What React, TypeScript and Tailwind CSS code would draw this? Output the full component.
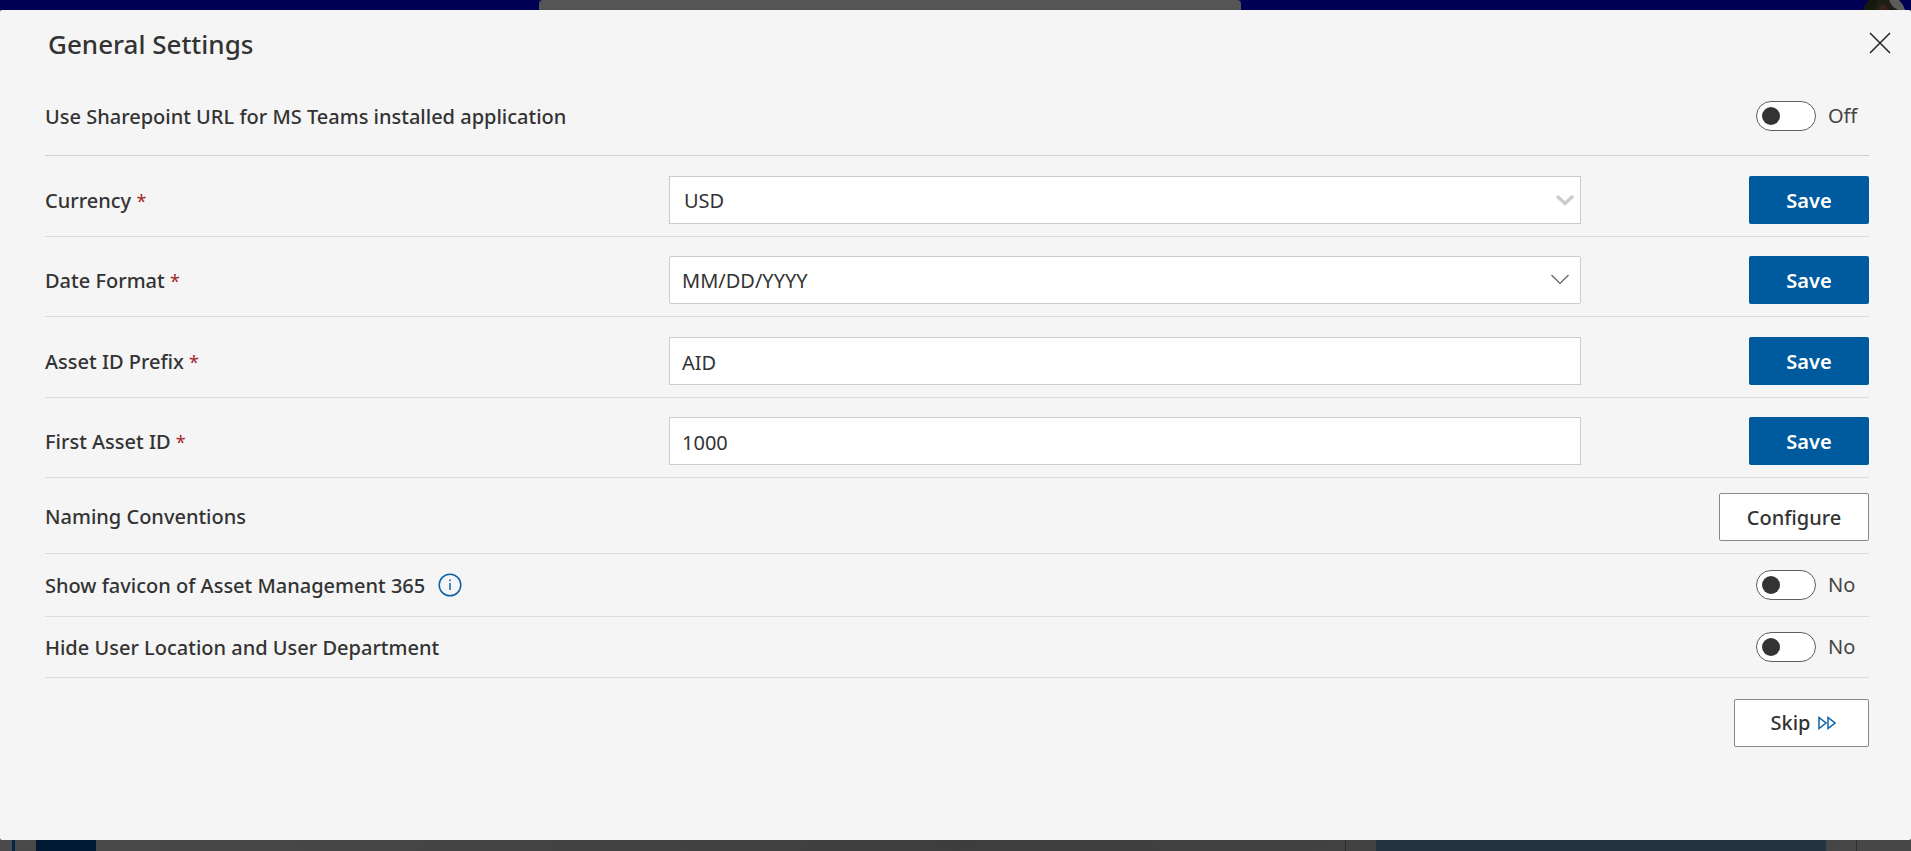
import { useState, type ReactNode } from "react";

function Toggle({ id, label, off, on }: { id: string; label: string; off: string; on: string }) {
  const [checked, setChecked] = useState(false);
  return (
    <div className="flex items-center justify-end">
      <label className="relative flex h-[30px] w-[113px] cursor-pointer items-center gap-3 text-[20px] leading-7 text-[#444444]">
        <input
          id={id}
          type="checkbox"
          role="switch"
          aria-label={label}
          checked={checked}
          onChange={(e) => setChecked(e.target.checked)}
          className="peer sr-only"
        />
        <span className="flex h-[30px] w-[60px] shrink-0 items-center rounded-full border border-[#605e5c] bg-white px-[5px] peer-checked:justify-end">
          <span className="size-[18px] rounded-full bg-[#333333]" />
        </span>
        <span>{checked ? on : off}</span>
      </label>
    </div>
  );
}

function FieldRow({ id, label, children }: { id: string; label: string; children: ReactNode }) {
  return (
    <div className="grid grid-cols-[13fr_19fr_6fr] items-center border-b border-[#dcdcdc] pt-5 pb-3 even:pt-[19px]">
      <label htmlFor={id} className="pt-0.5 font-medium">
        {label} <span className="text-[18px] leading-5 font-normal text-[#a4262c]">*</span>
      </label>
      {children}
      <button
        type="button"
        className="h-12 w-[120px] justify-self-end rounded-[2px] bg-[#005a9e] pt-0.5 font-semibold text-white"
      >
        Save
      </button>
    </div>
  );
}

const fieldClass = "block h-12 w-full border border-[#cccccc] bg-white pt-0.5 text-[#333333]";

export default function App() {
  return (
    <div className="flex min-h-screen flex-col bg-[#434343] font-['Noto_Sans',sans-serif] text-[20px] leading-7 text-[#333333]">
      <div className="flex h-[10px] shrink-0 overflow-hidden bg-[#000055]">
        <div className="ml-[539px] w-[702px] rounded-t-[4px] bg-[#555555]" />
        <svg className="mr-1 ml-auto" width="46" height="10" viewBox="0 0 46 10" aria-hidden="true">
          <circle cx="23" cy="16" r="22" fill="#17190f" />
          <path d="M18 0h20a22 22 0 0 1 6 10H37q-7-3-9-10z" fill="#5c5c5c" />
          <path d="M17 0h11q2 7 8 10H14z" fill="#1e2014" />
          <path d="M18 10q0-5 4-5t4 5z" fill="#3a231d" />
        </svg>
      </div>

      <main className="flex-1 rounded-[2px] bg-[#f5f5f5] pr-[42px] pl-[45px]">
        <header className="flex h-[71px] items-start justify-between pt-[18px]">
          <h1 className="pl-[3px] text-[26px] leading-8 font-medium">General Settings</h1>
          <button type="button" aria-label="Close" className="-mr-[26px] p-1">
            <svg width="22" height="22" viewBox="0 0 22 22" fill="none" stroke="#222" strokeWidth="1.5">
              <path d="M1 1l20 20M21 1L1 21" />
            </svg>
          </button>
        </header>

        <div className="flex items-start justify-between border-b border-[#d0d0d0] pt-5 pb-6">
          <label htmlFor="sharepoint" className="pt-0.5 font-medium">
            Use Sharepoint URL for MS Teams installed application
          </label>
          <Toggle id="sharepoint" label="Use Sharepoint URL for MS Teams installed application" off="Off" on="On" />
        </div>

        <div>
          <FieldRow id="currency" label="Currency">
            <div className="relative">
              <select id="currency" defaultValue="USD" className={`${fieldClass} appearance-none pl-[14px]`}>
                <option>USD</option>
                <option>EUR</option>
                <option>GBP</option>
              </select>
              <svg className="pointer-events-none absolute top-[19px] right-[7px]" width="18" height="11" viewBox="0 0 18 11" fill="none" stroke="#cccccc" strokeWidth="3.4" strokeLinecap="round">
                <path d="M2 2l7 6.5L16 2" />
              </svg>
            </div>
          </FieldRow>
          <FieldRow id="date-format" label="Date Format">
            <div className="relative">
              <select id="date-format" defaultValue="MM/DD/YYYY" className={`${fieldClass} appearance-none rounded-[2px] pl-3`}>
                <option>MM/DD/YYYY</option>
                <option>DD/MM/YYYY</option>
              </select>
              <svg className="pointer-events-none absolute top-[18px] right-3" width="18" height="11" viewBox="0 0 18 11" fill="none" stroke="#605e5c" strokeWidth="1.2">
                <path d="M.5 1L9 9.5 17.5 1" />
              </svg>
            </div>
          </FieldRow>
          <FieldRow id="prefix" label="Asset ID Prefix">
            <input id="prefix" type="text" defaultValue="AID" className={`${fieldClass} px-3`} />
          </FieldRow>
          <FieldRow id="first-id" label="First Asset ID">
            <input id="first-id" type="text" defaultValue="1000" className={`${fieldClass} px-3`} />
          </FieldRow>
        </div>

        <div className="flex items-center justify-between border-b border-[#dcdcdc] pt-[15px] pb-3">
          <span className="font-medium">Naming Conventions</span>
          <button type="button" className="h-12 w-[150px] rounded-[2px] border border-[#8a8886] bg-white pt-0.5 font-medium">
            Configure
          </button>
        </div>

        <div className="flex items-center justify-between border-b border-[#dcdcdc] py-4">
          <div className="flex h-[30px] items-center gap-[13px]">
            <label htmlFor="favicon" className="pt-0.5 font-medium">
              Show favicon of Asset Management 365
            </label>
            <svg width="24" height="24" viewBox="0 0 24 24" fill="none" stroke="#0f62a8" strokeWidth="1.5" aria-hidden="true">
              <circle cx="12" cy="12" r="10.8" />
              <path d="M12 10v7M12 6.5v1.7" />
            </svg>
          </div>
          <Toggle id="favicon" label="Show favicon of Asset Management 365" off="No" on="Yes" />
        </div>

        <div className="flex items-center justify-between border-b border-[#dcdcdc] py-[15px]">
          <label htmlFor="hide-user" className="pt-0.5 font-medium">
            Hide User Location and User Department
          </label>
          <Toggle id="hide-user" label="Hide User Location and User Department" off="No" on="Yes" />
        </div>

        <div className="flex justify-end pt-[21px]">
          <button type="button" className="flex h-12 w-[135px] items-center justify-center gap-2 rounded-[2px] border border-[#8a8886] bg-white pl-1 font-medium">
            Skip
            <svg width="18" height="14" viewBox="0 0 18 14" fill="none" stroke="#0f62a8" strokeWidth="1.5" aria-hidden="true">
              <path d="M1 1.5v11l7-5.5zM10 1.5v11l7-5.5z" />
            </svg>
          </button>
        </div>
      </main>

      <div className="flex h-[11px] shrink-0 bg-linear-to-r from-[#4a4a4a] via-[#3e3e3e] to-[#474747]">
        <div className="ml-3 w-[3px] bg-[#00264a]" />
        <div className="ml-[21px] w-[60px] bg-[#001a33]" />
        <div className="ml-auto w-px bg-[#2c2c2c]" />
        <div className="ml-[30px] w-[450px] bg-[#26343f]" />
        <div className="mr-[54px] ml-[30px] w-px bg-[#2c2c2c]" />
      </div>
    </div>
  );
}
